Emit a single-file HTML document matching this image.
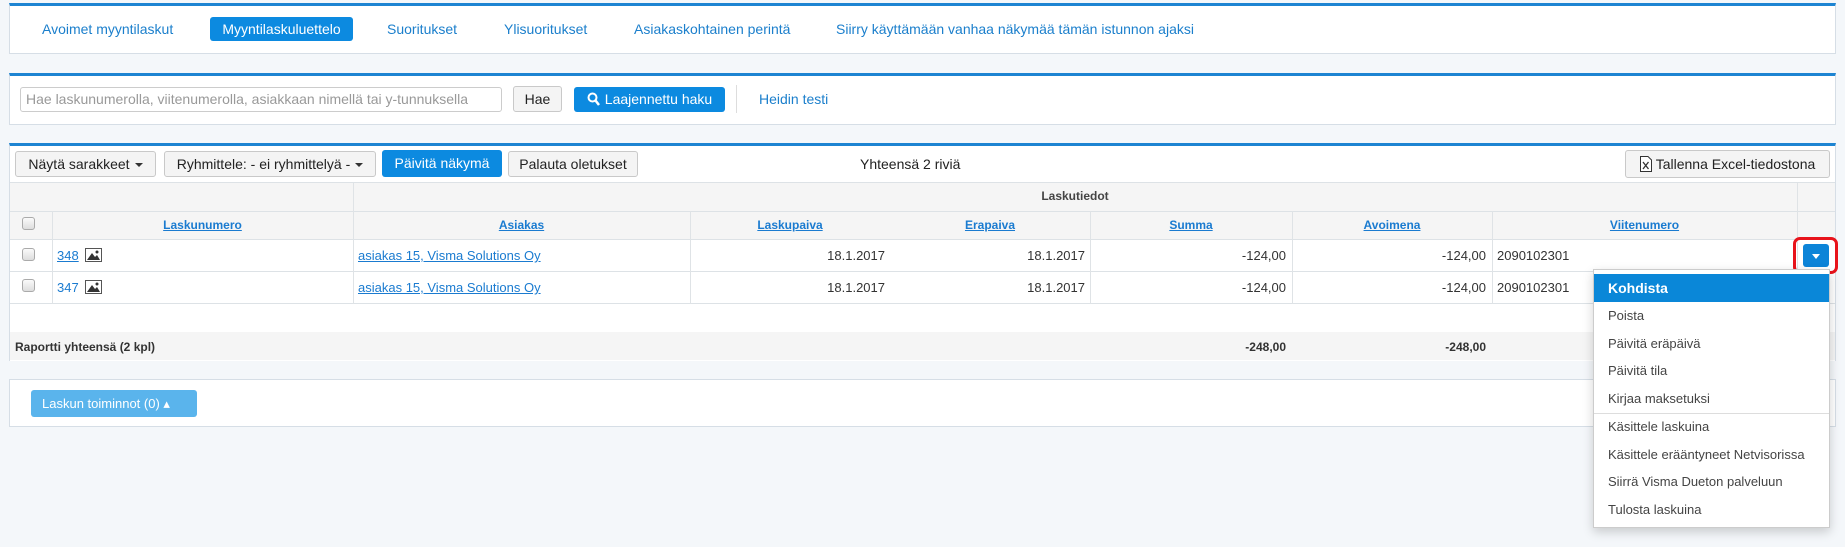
<!DOCTYPE html>
<html><head><meta charset="utf-8"><style>
*{box-sizing:border-box;margin:0;padding:0}
body{width:1845px;height:547px;background:#f4f7fa;font-family:"Liberation Sans",Arial,sans-serif;font-size:13px;color:#333;position:relative;overflow:hidden}
.a{position:absolute}
.panel{position:absolute;background:#fff;border:1px solid #d6dee6;border-top:3px solid #1d84d2}
.nav{position:absolute;top:19px;font-size:14px;color:#1b7fcc;line-height:20px}
.btn{position:absolute;border:1px solid #c9c9c9;border-radius:3px;background:#f4f4f4;font-size:14px;color:#222;text-align:center;line-height:25px}
.bb{position:absolute;background:#0c8ae0;color:#fff;border-radius:3px;font-size:14px;text-align:center}
.car{display:inline-block;width:0;height:0;border-left:4px solid transparent;border-right:4px solid transparent;border-top:4px solid #333;vertical-align:middle;margin-left:5px}
.hl{position:absolute;font-weight:bold;font-size:12px;color:#1a7bd0;text-decoration:underline;text-align:center}
.vl{position:absolute;width:1px;background:#dfe3e6}
.hz{position:absolute;height:1px;background:#dde2e6}
.cb{position:absolute;width:13px;height:13px;border:1px solid #aaa;border-radius:3px;background:linear-gradient(#fafafa,#ddd)}
.r{position:absolute;text-align:right;font-size:13px}
.lnk{color:#1a7bd0;text-decoration:underline}
.mi{position:absolute;left:1594px;width:235px;height:28px;line-height:28px;padding-left:14px;font-size:13px;color:#444}
.img{display:inline-block;vertical-align:-2px;margin-left:6px}
</style></head><body>
<div class="panel" style="left:9px;top:3px;width:1827px;height:51px"></div>
<div class="nav" style="left:42px">Avoimet myyntilaskut</div>
<div class="bb" style="left:210px;top:17px;width:143px;height:24px;line-height:24px">Myyntilaskuluettelo</div>
<div class="nav" style="left:387px">Suoritukset</div>
<div class="nav" style="left:504px">Ylisuoritukset</div>
<div class="nav" style="left:634px">Asiakaskohtainen perintä</div>
<div class="nav" style="left:836px">Siirry käyttämään vanhaa näkymää tämän istunnon ajaksi</div>
<div class="panel" style="left:9px;top:73px;width:1827px;height:52px"></div>
<div class="a" style="left:20px;top:87px;width:482px;height:25px;border:1px solid #ccc;border-radius:3px;background:#fff;color:#999;font-size:14px;line-height:23px;padding-left:5px">Hae laskunumerolla, viitenumerolla, asiakkaan nimellä tai y-tunnuksella</div>
<div class="btn" style="left:513px;top:86px;width:49px;height:26px">Hae</div>
<div class="bb" style="left:574px;top:87px;width:151px;height:25px;line-height:25px"><svg width="13" height="14" viewBox="0 0 13 14" style="vertical-align:-2px;margin-right:5px"><circle cx="5.5" cy="5.5" r="4" fill="none" stroke="#fff" stroke-width="2"/><path d="M8.5 8.5L12 13" stroke="#fff" stroke-width="2.5"/></svg>Laajennettu haku</div>
<div class="a" style="left:736px;top:85px;width:1px;height:28px;background:#ddd"></div>
<div class="nav" style="left:759px;top:89px">Heidin testi</div>
<div class="panel" style="left:9px;top:143px;width:1827px;height:218px;border-bottom:none"></div>
<div class="btn" style="left:15px;top:151px;width:141px;height:26px">Näytä sarakkeet<span class="car"></span></div>
<div class="btn" style="left:164px;top:151px;width:212px;height:26px">Ryhmittele: - ei ryhmittelyä -<span class="car"></span></div>
<div class="bb" style="left:382px;top:150px;width:120px;height:27px;line-height:27px">Päivitä näkymä</div>
<div class="btn" style="left:508px;top:151px;width:130px;height:26px">Palauta oletukset</div>
<div class="a" style="left:860px;top:156px;font-size:14px;color:#222">Yhteensä 2 riviä</div>
<div class="btn" style="left:1625px;top:150px;width:205px;height:28px;line-height:26px"><svg width="12" height="16" viewBox="0 0 12 16" style="vertical-align:-3px;margin-right:4px"><path d="M0.5 0.5H8L11.5 4V15.5H0.5Z" fill="#fff" stroke="#333"/><path d="M3 6L8.5 13M8.5 6L3 13" stroke="#333" stroke-width="1.3"/></svg>Tallenna Excel-tiedostona</div>
<div class="a" style="left:10px;top:183px;width:1825px;height:56px;background:#f5f5f5"></div>
<div class="hz" style="left:10px;top:182px;width:1825px"></div>
<div class="hz" style="left:10px;top:211px;width:1825px"></div>
<div class="hz" style="left:10px;top:239px;width:1825px"></div>
<div class="hz" style="left:10px;top:271px;width:1825px"></div>
<div class="hz" style="left:10px;top:303px;width:1825px"></div>
<div class="a" style="left:353px;top:189px;width:1444px;text-align:center;font-weight:bold;font-size:12px;color:#444">Laskutiedot</div>
<div class="vl" style="left:353px;top:183px;height:28px"></div>
<div class="vl" style="left:1797px;top:183px;height:88px"></div>
<div class="vl" style="left:52px;top:211px;height:93px"></div>
<div class="vl" style="left:353px;top:211px;height:93px"></div>
<div class="vl" style="left:690px;top:211px;height:93px"></div>
<div class="vl" style="left:1090px;top:211px;height:93px"></div>
<div class="vl" style="left:1292px;top:211px;height:93px"></div>
<div class="vl" style="left:1492px;top:211px;height:93px"></div>
<div class="vl" style="left:353px;top:332px;height:28px"></div>
<div class="vl" style="left:690px;top:332px;height:28px"></div>
<div class="vl" style="left:1090px;top:332px;height:28px"></div>
<div class="vl" style="left:1292px;top:332px;height:28px"></div>
<div class="vl" style="left:1492px;top:332px;height:28px"></div>
<div class="cb" style="left:22px;top:217px"></div>
<div class="hl" style="left:52px;top:218px;width:301px">Laskunumero</div>
<div class="hl" style="left:353px;top:218px;width:337px">Asiakas</div>
<div class="hl" style="left:690px;top:218px;width:200px">Laskupaiva</div>
<div class="hl" style="left:890px;top:218px;width:200px">Erapaiva</div>
<div class="hl" style="left:1090px;top:218px;width:202px">Summa</div>
<div class="hl" style="left:1292px;top:218px;width:200px">Avoimena</div>
<div class="hl" style="left:1492px;top:218px;width:305px">Viitenumero</div>
<div class="cb" style="left:22px;top:248px"></div>
<div class="a" style="left:57px;top:248px"><span class="lnk">348</span><svg class="img" width="17" height="14" viewBox="0 0 17 14"><rect x="0.5" y="0.5" width="16" height="13" fill="#fff" stroke="#555"/><path d="M2 12L7 5L10 9L12 7L15 12Z" fill="#333"/><circle cx="12" cy="4" r="1.5" fill="#333"/></svg></div>
<div class="a lnk" style="left:358px;top:248px">asiakas 15, Visma Solutions Oy</div>
<div class="r" style="left:690px;top:248px;width:195px">18.1.2017</div>
<div class="r" style="left:890px;top:248px;width:195px">18.1.2017</div>
<div class="r" style="left:1090px;top:248px;width:196px">-124,00</div>
<div class="r" style="left:1292px;top:248px;width:194px">-124,00</div>
<div class="a" style="left:1497px;top:248px">2090102301</div>
<div class="cb" style="left:22px;top:279px"></div>
<div class="a" style="left:57px;top:280px"><span style="color:#1a7bd0">347</span><svg class="img" width="17" height="14" viewBox="0 0 17 14"><rect x="0.5" y="0.5" width="16" height="13" fill="#fff" stroke="#555"/><path d="M2 12L7 5L10 9L12 7L15 12Z" fill="#333"/><circle cx="12" cy="4" r="1.5" fill="#333"/></svg></div>
<div class="a lnk" style="left:358px;top:280px">asiakas 15, Visma Solutions Oy</div>
<div class="r" style="left:690px;top:280px;width:195px">18.1.2017</div>
<div class="r" style="left:890px;top:280px;width:195px">18.1.2017</div>
<div class="r" style="left:1090px;top:280px;width:196px">-124,00</div>
<div class="r" style="left:1292px;top:280px;width:194px">-124,00</div>
<div class="a" style="left:1497px;top:280px">2090102301</div>
<div class="a" style="left:10px;top:332px;width:1825px;height:28px;background:#f5f5f5"></div>
<div class="a" style="left:15px;top:340px;font-weight:bold;font-size:12px">Raportti yhteensä (2 kpl)</div>
<div class="r" style="left:1090px;top:340px;width:196px;font-weight:bold;font-size:12px">-248,00</div>
<div class="r" style="left:1292px;top:340px;width:194px;font-weight:bold;font-size:12px">-248,00</div>
<div class="a" style="left:9px;top:379px;width:1827px;height:48px;background:#fff;border:1px solid #d6dee6"></div>
<div class="a" style="left:31px;top:390px;width:166px;height:27px;background:#5ab4ec;border-radius:3px;color:#fff;font-size:13px;line-height:27px;padding-left:11px">Laskun toiminnot (0) &#9652;</div>
<div class="a" style="left:1793px;top:237px;width:45px;height:37px;border:3px solid #e8131b;border-radius:7px"></div>
<div class="a" style="left:1803px;top:244px;width:26px;height:23px;background:#0c84d8;border-radius:3px"><div style="position:absolute;left:9px;top:10px;border-left:4px solid transparent;border-right:4px solid transparent;border-top:5px solid #fff"></div></div>
<div class="a" style="left:1593px;top:269px;width:237px;height:259px;background:#fff;border:1px solid #ccc;box-shadow:0 4px 10px rgba(0,0,0,.18)"></div>
<div class="mi" style="top:274px;background:#0a87d8;color:#fff;font-weight:bold;font-size:14px">Kohdista</div>
<div class="mi" style="top:302px">Poista</div>
<div class="mi" style="top:330px">Päivitä eräpäivä</div>
<div class="mi" style="top:357px">Päivitä tila</div>
<div class="mi" style="top:385px">Kirjaa maksetuksi</div>
<div class="a" style="left:1594px;top:413px;width:235px;height:1px;background:#ddd"></div>
<div class="mi" style="top:413px">Käsittele laskuina</div>
<div class="mi" style="top:441px">Käsittele erääntyneet Netvisorissa</div>
<div class="mi" style="top:468px">Siirrä Visma Dueton palveluun</div>
<div class="mi" style="top:496px">Tulosta laskuina</div>
</body></html>
